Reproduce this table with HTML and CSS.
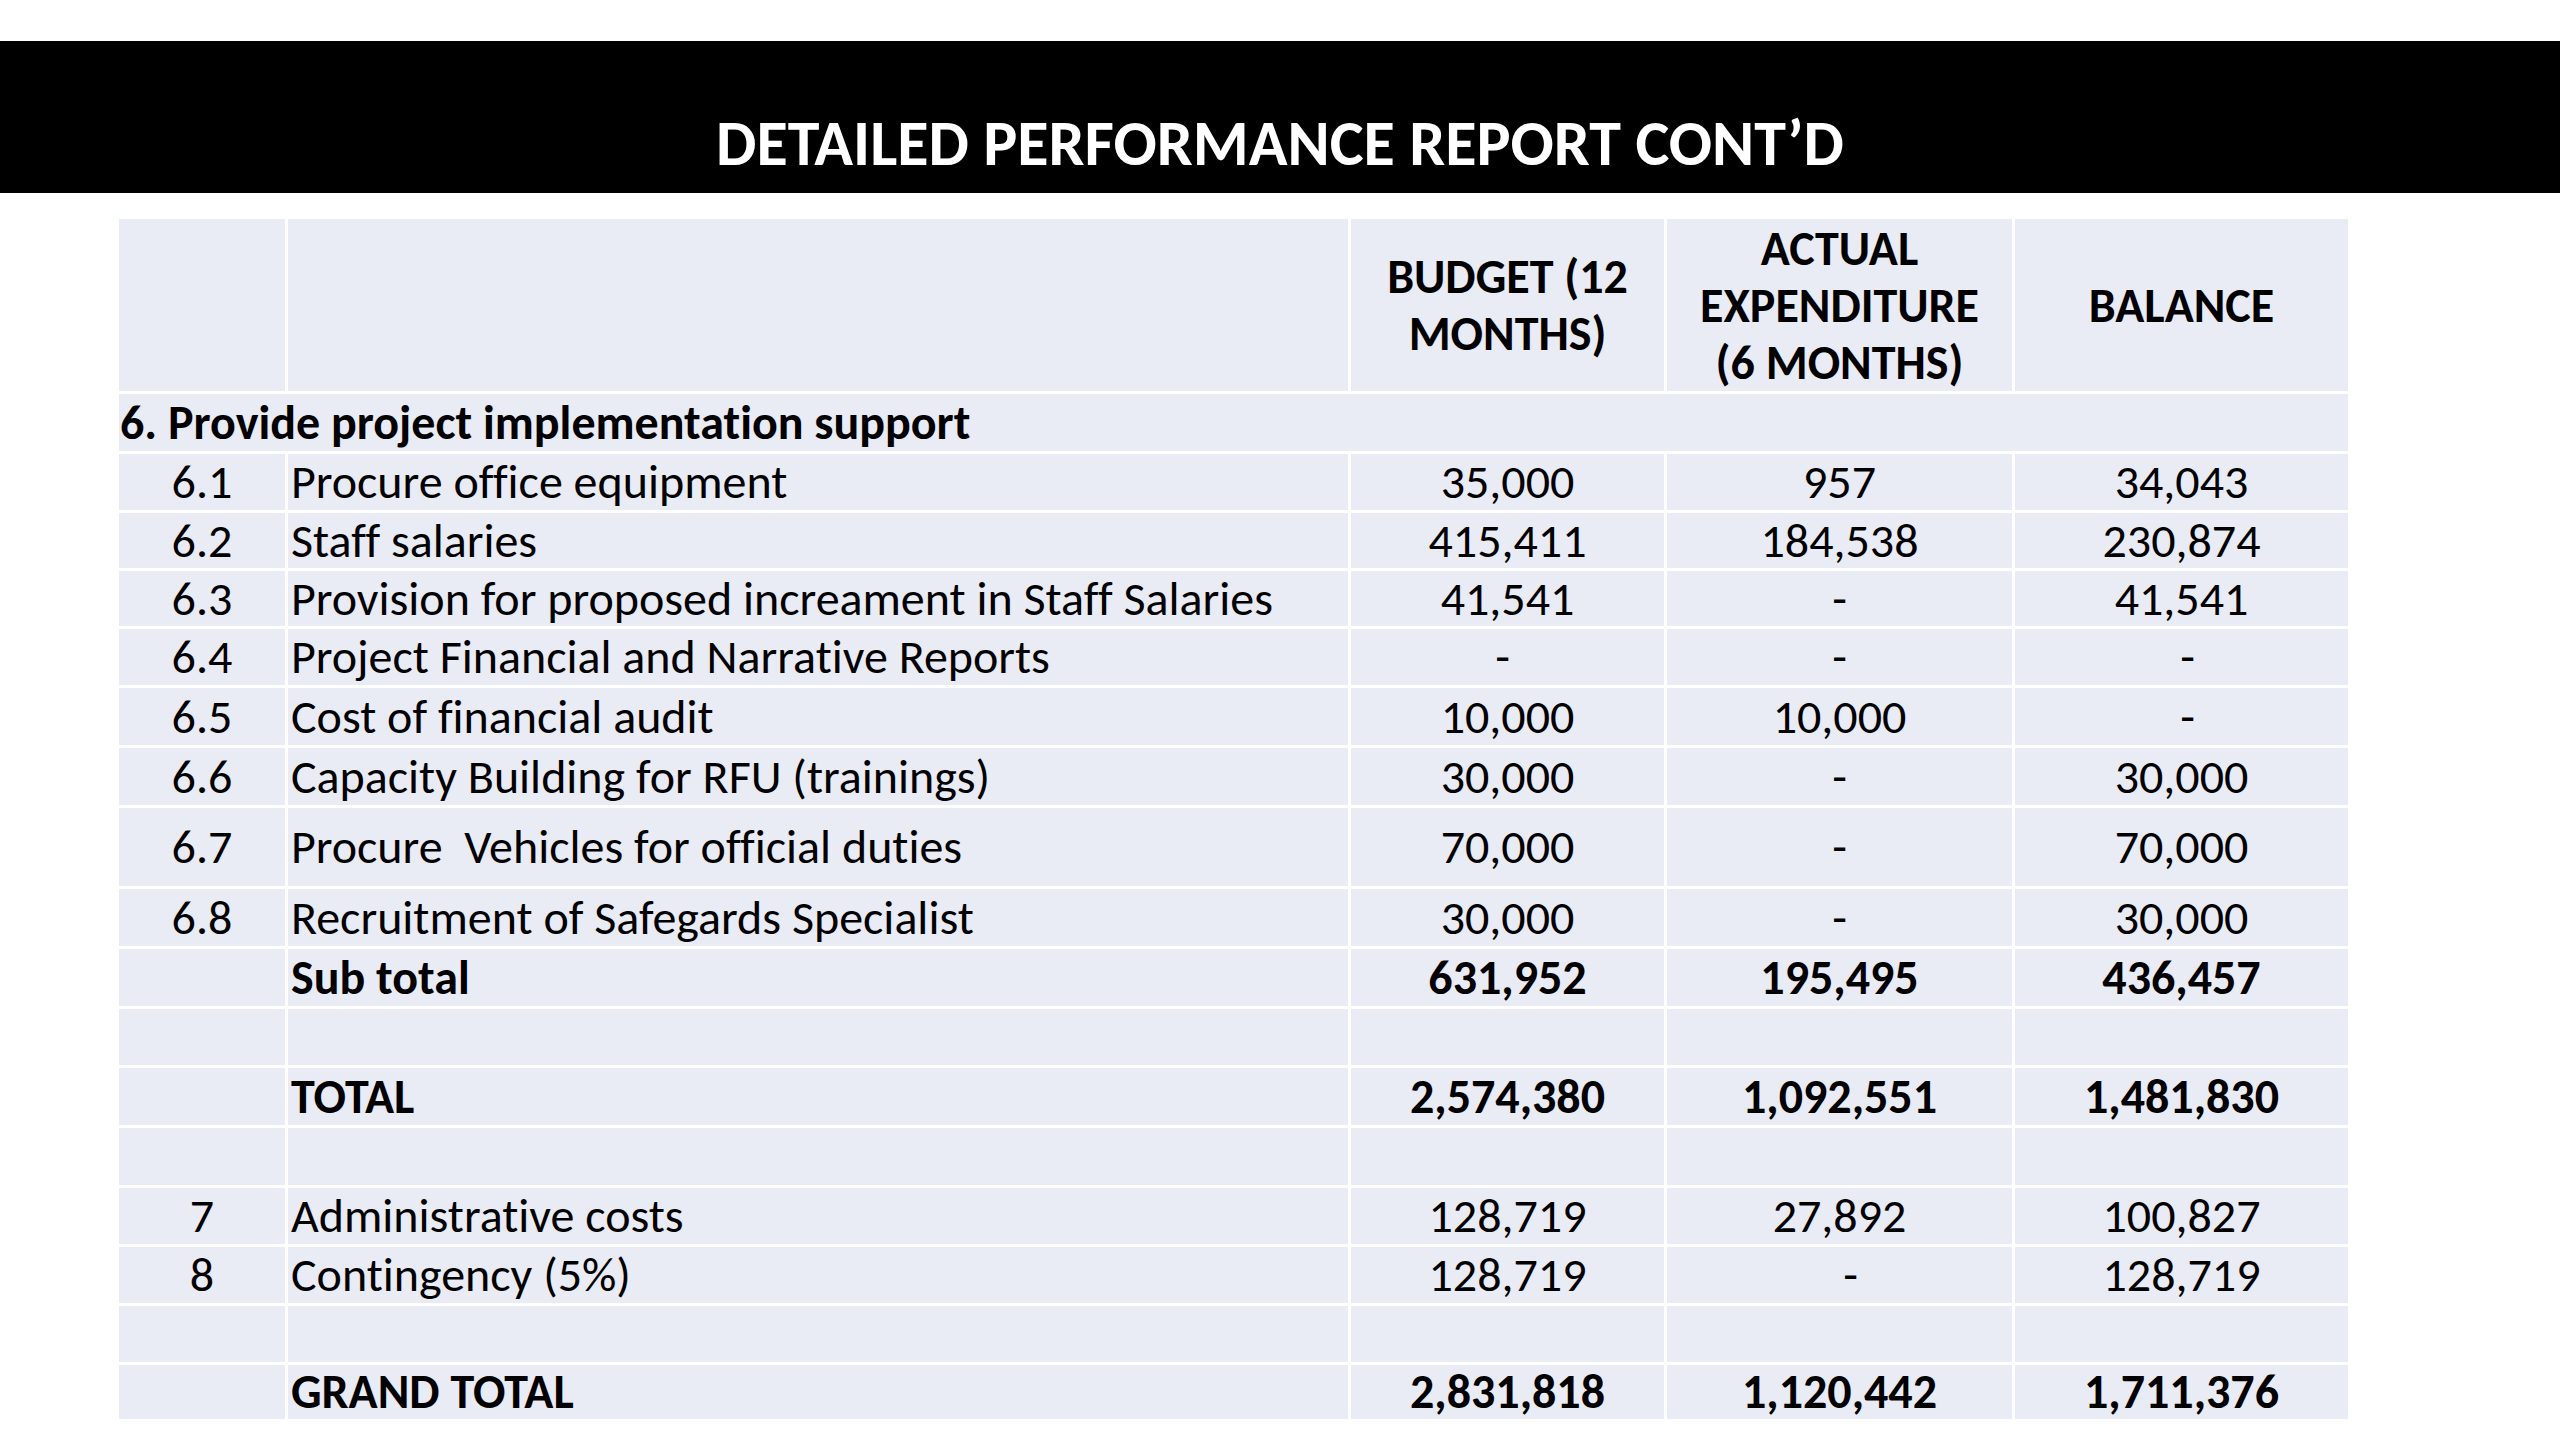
FILE: index.html
```html
<!DOCTYPE html>
<html lang="en">
<head>
<meta charset="utf-8">
<title>Detailed Performance Report Cont'd</title>
<link rel="stylesheet" href="styles.css">
</head>
<body>
<header class="title-bar">
  <h1 class="title">DETAILED PERFORMANCE REPORT CONT’D</h1>
</header>
<main class="report">
  <div class="grid">
    <div class="cell"></div>
    <div class="cell"></div>
    <div class="cell head">BUDGET (12<br>MONTHS)</div>
    <div class="cell head">ACTUAL<br>EXPENDITURE<br>(6 MONTHS)</div>
    <div class="cell head">BALANCE</div>

    <div class="cell section">6. Provide project implementation support</div>

    <div class="cell no">6.1</div><div class="cell desc">Procure office equipment</div>
    <div class="cell num">35,000</div><div class="cell num">957</div><div class="cell num">34,043</div>

    <div class="cell no">6.2</div><div class="cell desc">Staff salaries</div>
    <div class="cell num">415,411</div><div class="cell num">184,538</div><div class="cell num">230,874</div>

    <div class="cell no">6.3</div><div class="cell desc">Provision for proposed increament in Staff Salaries</div>
    <div class="cell num">41,541</div><div class="cell num">-</div><div class="cell num">41,541</div>

    <div class="cell no">6.4</div><div class="cell desc">Project Financial and Narrative Reports</div>
    <div class="cell num shift-l">-</div><div class="cell num">-</div><div class="cell num shift-r">-</div>

    <div class="cell no">6.5</div><div class="cell desc">Cost of financial audit</div>
    <div class="cell num">10,000</div><div class="cell num">10,000</div><div class="cell num shift-r">-</div>

    <div class="cell no">6.6</div><div class="cell desc">Capacity Building for RFU (trainings)</div>
    <div class="cell num">30,000</div><div class="cell num">-</div><div class="cell num">30,000</div>

    <div class="cell no">6.7</div><div class="cell desc">Procure&nbsp; Vehicles for official duties</div>
    <div class="cell num">70,000</div><div class="cell num">-</div><div class="cell num">70,000</div>

    <div class="cell no">6.8</div><div class="cell desc">Recruitment of Safegards Specialist</div>
    <div class="cell num">30,000</div><div class="cell num">-</div><div class="cell num">30,000</div>

    <div class="cell no"></div><div class="cell desc strong">Sub total</div>
    <div class="cell num strong">631,952</div><div class="cell num strong">195,495</div><div class="cell num strong">436,457</div>

    <div class="cell"></div><div class="cell"></div><div class="cell"></div><div class="cell"></div><div class="cell"></div>

    <div class="cell no"></div><div class="cell desc strong">TOTAL</div>
    <div class="cell num strong">2,574,380</div><div class="cell num strong">1,092,551</div><div class="cell num strong">1,481,830</div>

    <div class="cell"></div><div class="cell"></div><div class="cell"></div><div class="cell"></div><div class="cell"></div>

    <div class="cell no">7</div><div class="cell desc">Administrative costs</div>
    <div class="cell num">128,719</div><div class="cell num">27,892</div><div class="cell num">100,827</div>

    <div class="cell no">8</div><div class="cell desc">Contingency (5%)</div>
    <div class="cell num">128,719</div><div class="cell num shift-r2">-</div><div class="cell num">128,719</div>

    <div class="cell"></div><div class="cell"></div><div class="cell"></div><div class="cell"></div><div class="cell"></div>

    <div class="cell no"></div><div class="cell desc strong">GRAND TOTAL</div>
    <div class="cell num strong">2,831,818</div><div class="cell num strong">1,120,442</div><div class="cell num strong">1,711,376</div>
  </div>
</main>
</body>
</html>
```

FILE: styles.css
```css
* {
  box-sizing: border-box;
}

html, body {
  margin: 0;
  padding: 0;
  background: #ffffff;
}

body {
  width: 2560px;
  height: 1440px;
  overflow: hidden;
  font-family: Carlito, Calibri, Lato, "Open Sans", sans-serif;
  font-variant-ligatures: none;
  color: #000;
}

.title-bar {
  margin-top: 41px;
  height: 152px;
  background: #000;
  padding-top: 70px;
}

.title {
  margin: 0;
  font-size: 64px;
  line-height: 64px;
  font-weight: 700;
  color: #fff;
  text-align: center;
}

.report {
  padding: 26px 0 0 119px;
}

.grid {
  display: grid;
  width: 2229px;
  grid-template-columns: 166px 1060px 313px 345px 333px;
  grid-template-rows: 172px 57px 56px 55px 55px 56px 57px 57px 78px 57px 57px 56px 57px 57px 56px 56px 56px 54px;
  gap: 3px;
}

.cell {
  background: #e9ebf5;
  display: flex;
  align-items: center;
  font-size: 48px;
  line-height: 1;
  white-space: nowrap;
}

.head {
  justify-content: center;
  text-align: center;
  font-weight: 700;
  line-height: 57px;
}

.section {
  grid-column: 1 / -1;
  font-weight: 700;
  padding-left: 1px;
}

.no {
  justify-content: center;
}

.desc {
  padding-left: 3px;
}

.num {
  justify-content: center;
}

.strong {
  font-weight: 700;
}

.shift-l {
  padding-right: 10px;
}

.shift-r {
  padding-left: 12px;
}

.shift-r2 {
  padding-left: 22px;
}
```
